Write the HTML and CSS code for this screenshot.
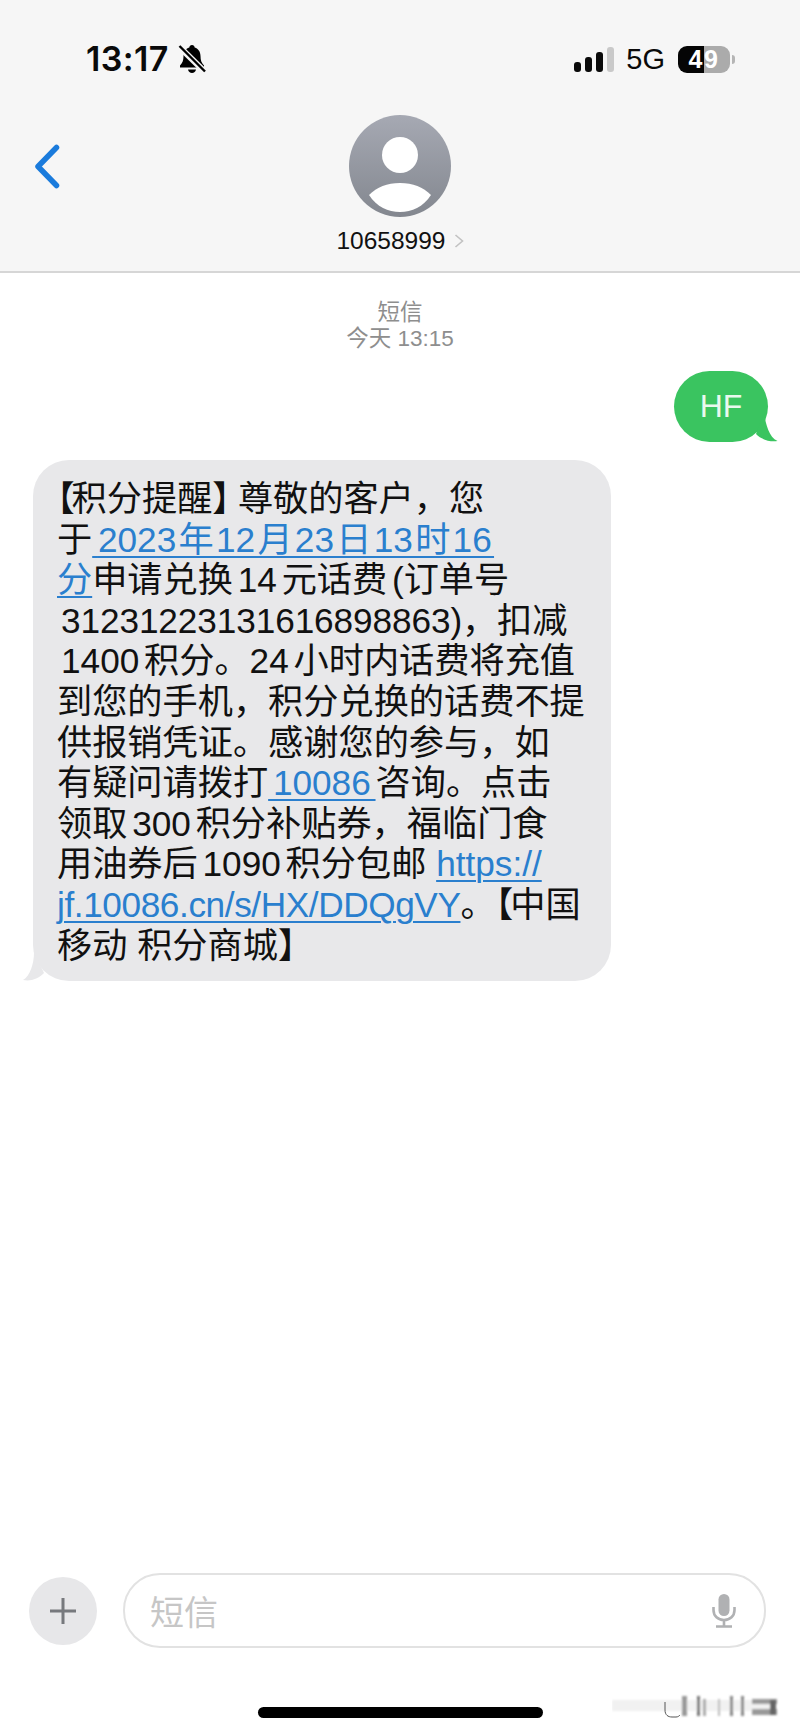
FILE: index.html
```html
<!DOCTYPE html>
<html lang="zh-CN">

<head>
    <meta charset="UTF-8">
    <meta name="viewport" content="width=device-width, initial-scale=1.0">
    <title>短信</title>
    <link rel="stylesheet" href="styles.css">
</head>

<body>

    <div class="phone">
        <header class="top-bar">
            <div class="status-bar">
                <div class="status-left">
                    <span class="clock">13:17</span>
                    <svg class="bell" viewBox="0 0 28 30" width="28" height="30">
                        <path d="M14 1c-1.600 0-2.500 1-2.700 2.500C7.500 4.700 5.500 8 5.500 12c0 4.500-1 7-3.500 9.500V23.500h24V21.500c-2.500-2.500-3.500-5-3.500-9.500 0-4-2-7.300-5.800-8.500C16.500 2 15.600 1 14 1z" fill="#000" />
                        <path d="M10 25.500h8c-.4 2-2 3.500-4 3.500s-3.600-1.500-4-3.500z" fill="#000" />
                        <path d="M2 3.500L27 28" stroke="#f6f6f6" stroke-width="6" />
                        <path d="M1.500 2L27 27.500" stroke="#000" stroke-width="2.400" />
                    </svg>
                </div>
                <div class="status-right">
                    <div class="signal">
                        <span class="bar bar-1"></span>
                        <span class="bar bar-2"></span>
                        <span class="bar bar-3"></span>
                        <span class="bar bar-4"></span>
                    </div>
                    <span class="network">5G</span>
                    <div class="battery"><span>49</span></div>
                    <span class="battery-nub"></span>
                </div>
            </div>

            <div class="contact-row">
                <a class="back" href="#">
                    <svg viewBox="0 0 26 45" width="26" height="45">
                        <path d="M22.500 3.500L4 22.500L22.500 41.500" fill="none" stroke="#1a7bdc" stroke-width="5.500" stroke-linecap="round" stroke-linejoin="round" />
                    </svg>
                </a>
                <div class="contact">
                    <svg class="avatar" viewBox="0 0 102 102" width="102" height="102">
                        <defs>
                            <linearGradient id="avatar-fill" x1="0" y1="0" x2="0" y2="1">
                                <stop offset="0" stop-color="#a6a9b3" />
                                <stop offset="1" stop-color="#83878f" />
                            </linearGradient>
                        </defs>
                        <circle cx="51" cy="51" r="51" fill="url(#avatar-fill)" />
                        <circle cx="51" cy="40" r="18" fill="#fff" />
                        <path d="M20 80C28 72 38 68 51 68C64 68 74 72 82 80C74 92 63 97 51 97C39 97 28 92 20 80Z" fill="#fff" />
                    </svg>
                    <div class="contact-name">
                        <span>10658999</span>
                        <svg viewBox="0 0 10 14" width="10" height="14">
                            <path d="M1.500 1L8.500 7L1.500 13" fill="none" stroke="#c2c2c2" stroke-width="1.600" />
                        </svg>
                    </div>
                </div>
            </div>
        </header>

        <main class="messages">
            <div class="meta">
                <div>短信</div>
                <div>今天 13:15</div>
            </div>

            <div class="bubble-sent">
                HF
                <svg class="tail-sent" viewBox="0 0 30 30" width="30" height="30">
                    <path d="M16 0C18 12 21 24 29.500 28C22 29 14 27 8 21Z" fill="#3ac460" />
                </svg>
            </div>

            <div class="bubble-received">
                <svg class="tail-received" viewBox="0 0 30 30" width="30" height="30">
                    <path d="M12 0C12 12 8 24 1 28C9 29.500 16 27 22 21Z" fill="#e8e8ea" />
                </svg>
                <span class="open-bracket">【</span>积分提醒<span class="close-bracket">】</span>尊敬的客户，您<br>
                于<a class="date-link" href="#"><span class="lead-gap">&nbsp;</span>2023 年 12 月 23 日 13 时 16&nbsp;<br>分</a>申请兑换 14 元话费 (订单号<br>
                <span class="nudge tight">31231223131616898863)，扣减</span><br>
                <span class="nudge">1400 积分。24 小时内话费将充值</span><br>
                到您的手机，积分兑换的话费不提<br>
                供报销凭证。感谢您的参与，如<br>
                有疑问请拨打<a href="#">&nbsp;10086&nbsp;</a>咨询。点击<br>
                领取 300 积分补贴券，福临门食<br>
                用油券后 1090 积分包邮<span class="wide-gap"> </span><a href="#">https://<br><span class="url-tail">jf.10086.cn/s/HX/DDQgVY</span></a>。<span class="open-bracket">【</span>中国<br>
                移动<span class="wide-gap"> </span>积分商城】
            </div>
        </main>

        <footer class="composer">
            <button class="plus" type="button">
                <svg viewBox="0 0 28 28" width="28" height="28">
                    <path d="M14 1V27M1 14H27" stroke="#77797d" stroke-width="3" />
                </svg>
            </button>
            <div class="input-box">
                <span class="placeholder">短信</span>
                <svg viewBox="0 0 24 34" width="24" height="34">
                    <rect x="6.500" y="0" width="11" height="22" rx="5.500" fill="#b0b1b3" />
                    <path d="M1.500 13V16C1.500 22 6 26 12 26C18 26 22.500 22 22.500 16V13M12 26V32M4 32.500H20" fill="none" stroke="#b0b1b3" stroke-width="2.600" />
                </svg>
            </div>
        </footer>

        <div class="home-bar"></div>

        <!-- smeared-out watermark in the corner -->
        <svg class="smear" viewBox="0 0 170 30" width="170" height="30">
            <defs>
                <filter id="smear-blur" x="-10%" y="-30%" width="120%" height="160%">
                    <feGaussianBlur stdDeviation="1.200 0.900" />
                </filter>
            </defs>
            <g filter="url(#smear-blur)">
                <rect x="0" y="10" width="160" height="11" fill="#f1f1f1" />
                <rect x="70" y="6" width="5" height="20" fill="#999" />
                <rect x="85" y="6" width="3" height="20" fill="#777" />
                <rect x="91" y="9" width="3" height="17" fill="#aaa" />
                <rect x="106" y="9" width="2" height="17" fill="#bbb" />
                <rect x="118" y="6" width="3" height="20" fill="#888" />
                <rect x="129" y="6" width="3" height="20" fill="#888" />
                <rect x="140" y="9" width="25" height="5" fill="#999" />
                <rect x="140" y="19" width="25" height="6" fill="#999" />
                <rect x="158" y="10" width="6" height="15" fill="#666" />
            </g>
            <path d="M53 12V20C53 25 56 27 60 27H64C66 27 67 26 68 25" fill="none" stroke="#555" stroke-width="1" />
        </svg>
    </div>

</body>

</html>
```

FILE: styles.css
```css
/* Basic reset and styling */
* {
    margin: 0;
    padding: 0;
    box-sizing: border-box;
}

body {
    font-family: "Liberation Sans", "Noto Sans CJK SC", sans-serif;
    background-color: #fff;
    color: #111;
}

.phone {
    position: relative;
    display: flex;
    flex-direction: column;
    width: 800px;
    height: 1734px;
    overflow: hidden;
}

/* Top bar */
.top-bar {
    height: 273px;
    background-color: #f6f6f6;
    border-bottom: 2px solid #d6d6d6;
}

.status-bar {
    display: flex;
    justify-content: space-between;
    align-items: center;
    height: 28px;
    margin-top: 45px;
    padding: 0 65px 0 86px;
}

.status-left {
    display: flex;
    align-items: center;
    gap: 9px;
}

.clock {
    font-family: Inter, sans-serif;
    font-weight: 600;
    font-size: 34px;
    line-height: 28px;
    letter-spacing: 0.400px;
    color: #0a0a0a;
}

.status-right {
    display: flex;
    align-items: center;
}

.signal {
    display: flex;
    align-items: flex-end;
    gap: 4px;
    height: 26px;
}

.bar {
    width: 7px;
    border-radius: 3px;
    background-color: #0a0a0a;
}

.bar-1 {
    height: 10px;
}

.bar-2 {
    height: 15px;
}

.bar-3 {
    height: 20px;
}

.bar-4 {
    height: 25px;
    background-color: #c9c9c9;
}

.network {
    margin-left: 12px;
    font-size: 29px;
    line-height: 28px;
    color: #0a0a0a;
}

.battery {
    display: flex;
    justify-content: center;
    align-items: center;
    width: 52px;
    height: 27px;
    margin-left: 13px;
    border-radius: 9px;
    background: linear-gradient(to right, #050505 50%, #ababab 50%);
    color: #fff;
    font-size: 25px;
    font-weight: 700;
    letter-spacing: 1.500px;
}

.battery-nub {
    width: 3px;
    height: 9px;
    margin-left: 2px;
    border-radius: 0 3px 3px 0;
    background-color: #b5b5b5;
}

.contact-row {
    display: grid;
    grid-template-columns: 1fr auto 1fr;
    align-items: start;
    margin-top: 42px;
    padding-left: 34px;
}

.back {
    display: block;
    margin-top: 29px;
}

.contact {
    display: flex;
    flex-direction: column;
    align-items: center;
    margin-left: -34px;
}

.avatar {
    display: block;
}

.contact-name {
    display: flex;
    align-items: center;
    gap: 8px;
    margin-top: 10px;
    font-size: 24.500px;
    line-height: 28px;
    color: #111;
}

/* Messages */
.messages {
    flex: 1;
    display: flex;
    flex-direction: column;
}

.meta {
    margin-top: 27px;
    text-align: center;
    font-size: 22.500px;
    line-height: 26px;
    color: #8e8e8e;
}

.bubble-sent {
    position: relative;
    align-self: flex-end;
    width: 94px;
    height: 71px;
    margin-top: 19px;
    margin-right: 32px;
    border-radius: 36px;
    background-color: #3ac460;
    color: #e9f9ee;
    font-size: 32px;
    line-height: 71px;
    text-align: center;
}

.tail-sent {
    position: absolute;
    right: -10px;
    bottom: -1px;
}

.bubble-received {
    position: relative;
    align-self: flex-start;
    width: 578px;
    margin-top: 18px;
    margin-left: 33px;
    padding: 19px 0 15px 24px;
    border-radius: 36px;
    background-color: #e8e8ea;
    font-size: 35.200px;
    line-height: 40.600px;
    word-spacing: -5px;
    white-space: nowrap;
}

.tail-received {
    position: absolute;
    left: -11px;
    bottom: -1px;
}

.bubble-received a {
    color: #2a7fce;
    text-decoration: underline;
    text-decoration-thickness: 2px;
    text-underline-offset: 4px;
}

.bubble-received .date-link {
    word-spacing: -7.500px;
}

.bubble-received .lead-gap {
    word-spacing: -4px;
}

.url-tail {
    letter-spacing: -0.400px;
}

/* half-width brackets, the CJK font sets them full width */
.open-bracket {
    font-feature-settings: "halt";
    letter-spacing: -3px;
}

.close-bracket {
    font-feature-settings: "halt";
    letter-spacing: 8px;
}

.nudge {
    margin-left: 4px;
}

.tight {
    letter-spacing: -0.100px;
}

.wide-gap {
    word-spacing: 0;
}

/* Composer */
.composer {
    display: flex;
    align-items: center;
    gap: 26px;
    height: 75px;
    padding-left: 29px;
}

.plus {
    display: flex;
    justify-content: center;
    align-items: center;
    width: 68px;
    height: 68px;
    border: none;
    border-radius: 50%;
    background-color: #e7e7e9;
}

.input-box {
    display: flex;
    justify-content: space-between;
    align-items: center;
    width: 643px;
    height: 75px;
    padding: 0 28px 0 25px;
    border: 2px solid #e2e2e2;
    border-radius: 37px;
}

.placeholder {
    font-size: 34px;
    color: #c6c6c6;
}

.home-bar {
    width: 285px;
    height: 11px;
    margin: 59px auto 16px;
    border-radius: 6px;
    background-color: #000;
}

.smear {
    position: absolute;
    left: 612px;
    bottom: 14px;
}
```
